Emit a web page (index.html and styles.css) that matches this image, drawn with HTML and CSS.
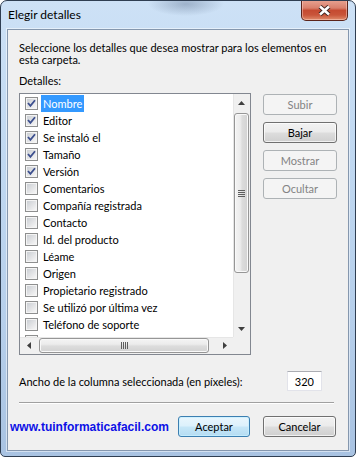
FILE: index.html
```html
<!DOCTYPE html>
<html lang="es">
<head>
<meta charset="utf-8">
<title>Elegir detalles</title>
<link rel="stylesheet" href="styles.css">
</head>
<body>
<div class="window">
  <div class="titlebar">
    <span class="title">Elegir detalles</span>
    <button class="close" aria-label="Cerrar">
      <svg width="13" height="11" viewBox="0 0 13 11">
        <path d="M2 1.5 L11 9.5 M11 1.5 L2 9.5" stroke="#3b2420" stroke-width="4.4" fill="none"/>
        <path d="M2 1.5 L11 9.5 M11 1.5 L2 9.5" stroke="#ffffff" stroke-width="2.6" fill="none"/>
      </svg>
    </button>
  </div>
  <div class="client">
    <p class="intro">Seleccione los detalles que desea mostrar para los elementos en esta carpeta.</p>
    <div class="label">Detalles:</div>
    <div class="main">
      <div class="listbox">
        <ul class="rows">
          <li class="row"><span class="cb"><svg class="chk" width="9" height="9" viewBox="0 0 9 9"><path d="M1 4 L3.4 6.8 L8 1.2" stroke="#3c4f8e" stroke-width="1.8" fill="none"/></svg></span><span class="text sel">Nombre</span></li>
          <li class="row"><span class="cb"><svg class="chk" width="9" height="9" viewBox="0 0 9 9"><path d="M1 4 L3.4 6.8 L8 1.2" stroke="#3c4f8e" stroke-width="1.8" fill="none"/></svg></span><span class="text">Editor</span></li>
          <li class="row"><span class="cb"><svg class="chk" width="9" height="9" viewBox="0 0 9 9"><path d="M1 4 L3.4 6.8 L8 1.2" stroke="#3c4f8e" stroke-width="1.8" fill="none"/></svg></span><span class="text">Se instaló el</span></li>
          <li class="row"><span class="cb"><svg class="chk" width="9" height="9" viewBox="0 0 9 9"><path d="M1 4 L3.4 6.8 L8 1.2" stroke="#3c4f8e" stroke-width="1.8" fill="none"/></svg></span><span class="text">Tamaño</span></li>
          <li class="row"><span class="cb"><svg class="chk" width="9" height="9" viewBox="0 0 9 9"><path d="M1 4 L3.4 6.8 L8 1.2" stroke="#3c4f8e" stroke-width="1.8" fill="none"/></svg></span><span class="text">Versión</span></li>
          <li class="row"><span class="cb"></span><span class="text">Comentarios</span></li>
          <li class="row"><span class="cb"></span><span class="text">Compañía registrada</span></li>
          <li class="row"><span class="cb"></span><span class="text">Contacto</span></li>
          <li class="row"><span class="cb"></span><span class="text">Id. del producto</span></li>
          <li class="row"><span class="cb"></span><span class="text">Léame</span></li>
          <li class="row"><span class="cb"></span><span class="text">Origen</span></li>
          <li class="row"><span class="cb"></span><span class="text">Propietario registrado</span></li>
          <li class="row"><span class="cb"></span><span class="text">Se utilizó por última vez</span></li>
          <li class="row"><span class="cb"></span><span class="text">Teléfono de soporte</span></li>
          <li class="row"><span class="cb"></span></li>
        </ul>
        <div class="vscroll">
          <div class="arr"><svg width="7" height="4" viewBox="0 0 7 4"><polygon points="3.5,0 7,4 0,4" fill="#3f3f3f"/></svg></div>
          <div class="vthumb"><svg width="7" height="7" viewBox="0 0 7 7"><rect x="0" y="0" width="7" height="1" fill="#5e5e5e"/><rect x="0" y="2" width="7" height="1" fill="#5e5e5e"/><rect x="0" y="4" width="7" height="1" fill="#5e5e5e"/><rect x="0" y="6" width="7" height="1" fill="#5e5e5e"/></svg></div>
          <div class="fill"></div>
          <div class="arr"><svg width="7" height="4" viewBox="0 0 7 4"><polygon points="0,0 7,0 3.5,4" fill="#3f3f3f"/></svg></div>
        </div>
        <div class="hscroll">
          <div class="arr"><svg width="4" height="7" viewBox="0 0 4 7"><polygon points="0,3.5 4,0 4,7" fill="#3f3f3f"/></svg></div>
          <div class="hthumb"><svg width="7" height="7" viewBox="0 0 7 7"><rect x="0" y="0" width="1" height="7" fill="#5e5e5e"/><rect x="2" y="0" width="1" height="7" fill="#5e5e5e"/><rect x="4" y="0" width="1" height="7" fill="#5e5e5e"/><rect x="6" y="0" width="1" height="7" fill="#5e5e5e"/></svg></div>
          <div class="fill"></div>
          <div class="arr"><svg width="4" height="7" viewBox="0 0 4 7"><polygon points="0,0 4,3.5 0,7" fill="#3f3f3f"/></svg></div>
        </div>
        <div class="corner"></div>
      </div>
      <div class="side">
        <button class="btn" disabled>Subir</button>
        <button class="btn">Bajar</button>
        <button class="btn" disabled>Mostrar</button>
        <button class="btn" disabled>Ocultar</button>
      </div>
    </div>
    <div class="widthrow">
      <span>Ancho de la columna seleccionada (en píxeles):</span>
      <input class="num" type="text" value="320">
    </div>
    <hr class="sep">
    <div class="footer">
      <a class="site">www.tuinformaticafacil.com</a>
      <button class="btn default ok">Aceptar</button>
      <button class="btn cancel">Cancelar</button>
    </div>
  </div>
</div>
</body>
</html>
```

FILE: styles.css
```css
html, body {
  margin: 0;
  padding: 0;
  background: #ffffff;
}

body {
  font-family: Lato, "Noto Sans", sans-serif;
  font-size: 11px;
  color: #000;
}

.window {
  width: 356px;
  height: 457px;
  box-sizing: border-box;
  border: 1px solid #2f3e52;
  border-radius: 7px 7px 5px 5px;
  background:
    radial-gradient(ellipse 38px 12px at 185px 3px, rgba(70, 90, 120, 0.35), rgba(70, 90, 120, 0) 100%),
    linear-gradient(180deg, #cde1f6 0%, #c0d8f1 35%, #b6cfeb 70%, #a9c3e2 100%);
  display: flex;
  flex-direction: column;
  padding: 0 6px 5px;
  overflow: hidden;
}

.titlebar {
  height: 28px;
  flex: none;
  display: flex;
  align-items: center;
  justify-content: space-between;
}

.title {
  padding-left: 1px;
  font-size: 12px;
  line-height: 28px;
  color: #000;
}

.close {
  align-self: flex-start;
  margin: -1px 1px 0 0;
  width: 47px;
  height: 21px;
  padding: 0;
  border: 1px solid #5b241b;
  border-top: none;
  border-radius: 0 0 5px 5px;
  background: linear-gradient(180deg, #e8a493 0%, #d9806c 40%, #c54a31 52%, #c9553a 75%, #e08c6c 100%);
  box-shadow: inset 0 0 0 1px rgba(255, 220, 210, 0.45);
  display: flex;
  align-items: center;
  justify-content: center;
}

.close svg {
  display: block;
}

.client {
  flex: 1;
  background: #f0f0f0;
  border: 1px solid #8597ae;
  box-shadow: 0 0 0 1px rgba(255, 255, 255, 0.5);
  padding: 12px 11px 13px;
  display: flex;
  flex-direction: column;
}

.intro {
  margin: 0;
  line-height: 12px;
  width: 312px;
}

.label {
  margin-top: 9px;
  line-height: 12px;
}

.main {
  margin-top: 6px;
  display: flex;
  align-items: flex-start;
  gap: 12px;
}

.listbox {
  width: 232px;
  box-sizing: border-box;
  border: 1px solid #828790;
  background: #ffffff;
  display: grid;
  grid-template-columns: 213px 17px;
  grid-template-rows: 243px 17px;
}

.rows {
  list-style: none;
  margin: 0;
  padding: 1px 0 0;
  overflow: hidden;
}

.row {
  height: 17px;
  display: flex;
  align-items: center;
  padding-left: 5px;
  white-space: nowrap;
}

.cb {
  flex: none;
  width: 13px;
  height: 13px;
  box-sizing: border-box;
  border: 1px solid #8e8f8f;
  padding: 1px;
  background: linear-gradient(135deg, #cbcfd4 0%, #e3e4e6 55%, #f6f6f6 100%) content-box, #f4f4f4;
}

.chk {
  display: block;
  overflow: visible;
}

.text {
  margin-left: 3px;
  padding: 0 2px;
  line-height: 17px;
}

.sel {
  background: #3399ff;
  color: #fff;
}

.vscroll {
  display: flex;
  flex-direction: column;
  background: #f0f0f0;
  box-shadow: inset 1px 0 0 #e6e6e6;
}

.hscroll {
  display: flex;
  align-items: center;
  background: #f0f0f0;
  box-shadow: inset 0 1px 0 #e6e6e6;
}

.arr {
  flex: none;
  width: 17px;
  height: 17px;
  display: flex;
  align-items: center;
  justify-content: center;
}

.arr svg {
  display: block;
}

.fill {
  flex: 1;
}

.vthumb {
  flex: none;
  margin: 2px 1px 0;
  height: 160px;
  box-sizing: border-box;
  border: 1px solid #969696;
  border-radius: 3px;
  background: linear-gradient(90deg, #f4f4f4 0%, #ececec 40%, #dcdcdc 55%, #d2d2d2 100%);
  box-shadow: inset 0 0 0 1px #f9f9f9;
  display: flex;
  align-items: center;
  justify-content: center;
}

.hthumb {
  flex: none;
  margin-left: 2px;
  width: 170px;
  height: 15px;
  box-sizing: border-box;
  border: 1px solid #969696;
  border-radius: 3px;
  background: linear-gradient(180deg, #f4f4f4 0%, #ececec 40%, #dcdcdc 55%, #d2d2d2 100%);
  box-shadow: inset 0 0 0 1px #f9f9f9;
  display: flex;
  align-items: center;
  justify-content: center;
}

.vthumb svg,
.hthumb svg {
  display: block;
}

.corner {
  background: #f0f0f0;
}

.side {
  width: 74px;
  margin-top: 1px;
  display: flex;
  flex-direction: column;
  gap: 7px;
}

.btn {
  height: 21px;
  box-sizing: border-box;
  padding: 0;
  font-family: inherit;
  font-size: 11px;
  color: #000;
  border: 1px solid #707070;
  border-radius: 3px;
  background: linear-gradient(180deg, #f2f2f2 0%, #ebebeb 48%, #dddddd 52%, #cfcfcf 100%);
  box-shadow: inset 0 0 0 1px rgba(255, 255, 255, 0.7);
}

.btn:disabled {
  color: #838383;
  border-color: #adb2b5;
  background: #f4f4f4;
  box-shadow: none;
}

.btn.default {
  border-color: #3c7fb1;
  background: linear-gradient(180deg, #eaf6fd 0%, #dcf1fc 48%, #c6e7f8 52%, #b5dcf2 100%);
  box-shadow: inset 0 0 0 1px rgba(200, 240, 255, 0.8);
}

.widthrow {
  margin-top: 16px;
  display: flex;
  align-items: center;
}

.num {
  margin-left: auto;
  margin-right: 15px;
  width: 35px;
  height: 20px;
  box-sizing: border-box;
  border: 1px solid #e2e3ea;
  border-top-color: #abadb3;
  background: #fff;
  font-family: inherit;
  font-size: 11px;
  color: #000;
  text-align: right;
  padding: 0 7px 0 0;
}

.sep {
  margin: 11px 3px 0 0;
  height: 0;
  border: none;
  border-top: 1px solid #a0a0a0;
  border-bottom: 1px solid #ffffff;
}

.footer {
  margin-top: 12px;
  display: flex;
  align-items: center;
}

.site {
  margin-left: -9px;
  margin-right: auto;
  font-family: "Liberation Sans", Arial, sans-serif;
  font-weight: bold;
  font-size: 12px;
  color: #0d10e6;
  text-decoration: none;
}

.ok {
  width: 72px;
}

.cancel {
  width: 73px;
  margin-left: 13px;
  margin-right: 1px;
}
```
